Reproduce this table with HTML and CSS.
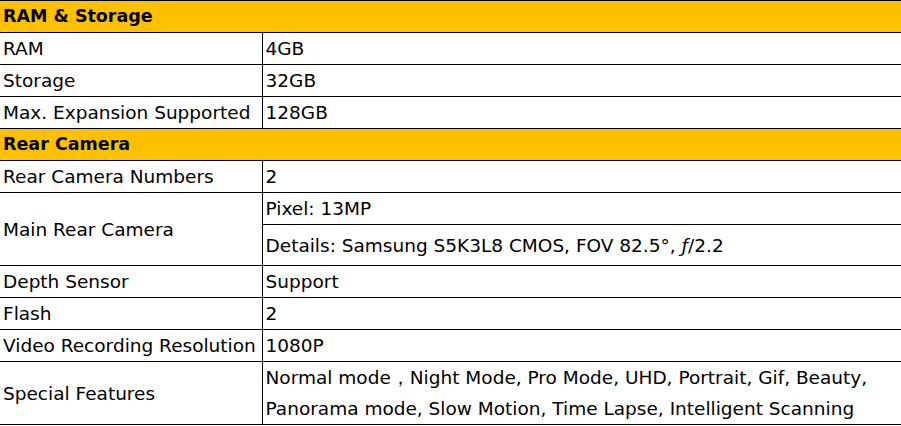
FILE: index.html
```html
<!DOCTYPE html>
<html>
<head>
  <meta charset="utf-8">
  <title>Specs</title>
  <link rel="stylesheet" href="styles.css">
</head>
<body>
<table class="spec-table">
  <colgroup>
    <col class="col-name">
    <col>
  </colgroup>
  <tr class="group-row"><td colspan="2">RAM &amp; Storage</td></tr>
  <tr><td>RAM</td><td>4GB</td></tr>
  <tr><td>Storage</td><td>32GB</td></tr>
  <tr><td>Max. Expansion Supported</td><td>128GB</td></tr>
  <tr class="group-row"><td colspan="2">Rear Camera</td></tr>
  <tr><td>Rear Camera Numbers</td><td>2</td></tr>
  <tr><td rowspan="2">Main Rear Camera</td><td>Pixel: 13MP</td></tr>
  <tr class="tall-row"><td>Details: Samsung S5K3L8 CMOS, FOV 82.5°, <i class="f-num">ƒ</i>/2.2</td></tr>
  <tr><td>Depth Sensor</td><td>Support</td></tr>
  <tr><td>Flash</td><td>2</td></tr>
  <tr><td>Video Recording Resolution</td><td>1080P</td></tr>
  <tr><td>Special Features</td><td>Normal mode，Night Mode, Pro Mode, UHD, Portrait, Gif, Beauty,<br>Panorama mode, Slow Motion, Time Lapse, Intelligent Scanning</td></tr>
</table>
</body>
</html>
```

FILE: styles.css
```css
html, body {
  margin: 0;
  padding: 0;
  background: #fff;
}

.spec-table {
  border-collapse: collapse;
  width: 901px;
  table-layout: fixed;
  font-family: "DejaVu Sans", sans-serif;
  font-size: 18.5px;
  color: #000;
}

.col-name {
  width: 262px;
}

.spec-table td {
  border: 1px solid #000;
  height: 31px;
  padding: 0 3px;
  line-height: 31px;
  vertical-align: middle;
  white-space: nowrap;
  overflow: hidden;
}

.spec-table td:first-child {
  border-left: none;
}

.spec-table td:last-child {
  border-right: none;
}

.group-row td {
  background-color: #ffc000;
  font-weight: bold;
  font-size: 17.5px;
}

.tall-row td {
  height: 40px;
}

.f-num {
  font-style: italic;
}
```
